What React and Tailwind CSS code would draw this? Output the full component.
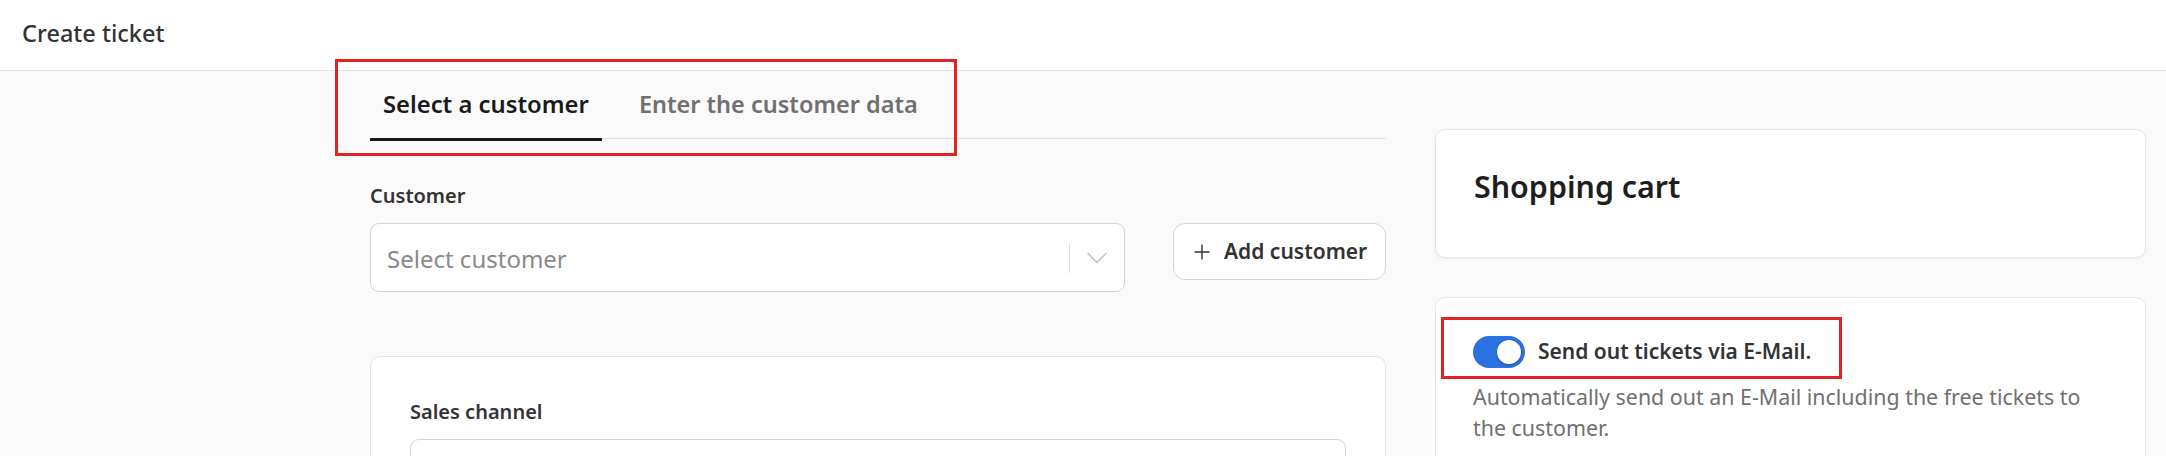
import React, { useState } from 'react';

// Thin chevron used in the customer select.
const Chevron = () => (
  <svg width="20" height="12" viewBox="0 0 20 12" fill="none" className="text-[#c4c4c4]">
    <path d="M1 1.5 L10 10.5 L19 1.5" stroke="currentColor" strokeWidth="1.6" strokeLinecap="round" strokeLinejoin="round" />
  </svg>
);

const Plus = () => (
  <svg width="16" height="16" viewBox="0 0 16 16" fill="none" className="text-[#333333]">
    <path d="M8 1 V15 M1 8 H15" stroke="currentColor" strokeWidth="1.4" strokeLinecap="round" />
  </svg>
);

const App = () => {
  const [tab, setTab] = useState('select');
  const [sendMail, setSendMail] = useState(true);

  return (
    <div className="min-h-screen bg-[#fafafa] font-['Noto_Sans',sans-serif]">
      {/* Top bar */}
      <header className="h-[71px] bg-white border-b border-[#e3e3e3] flex items-center pl-[22px]">
        <h1 className="text-[23.5px] font-medium text-[#333333] leading-none -mt-[2px]">Create ticket</h1>
      </header>

      <div className="flex gap-[49px] pl-[370px] pr-[20px]">
        {/* Left column */}
        <div className="w-[1016px] shrink-0">
          <div className="relative flex border-b border-[#e0e0e0] h-[68px]">
            <button
              onClick={() => setTab('select')}
              className={`relative z-10 px-[13px] h-[70px] text-[23.8px] font-semibold leading-none border-b-[3px] ${tab === 'select' ? 'text-[#1a1a1a] border-[#1a1a1a]' : 'text-[#707070] border-transparent'}`}
            >
              Select a customer
            </button>
            <button
              onClick={() => setTab('enter')}
              className={`relative z-10 ml-[24px] px-[13px] h-[70px] text-[23.5px] font-semibold leading-none border-b-[3px] ${tab === 'enter' ? 'text-[#1a1a1a] border-[#1a1a1a]' : 'text-[#707070] border-transparent'}`}
            >
              Enter the customer data
            </button>
            {/* annotation frame */}
            <div className="absolute left-[-35px] top-[-12px] w-[622px] h-[97px] border-[3px] border-[#e42222] pointer-events-none" />
          </div>

          <div className="pt-[42px]">
            <label className="block text-[20px] font-semibold text-[#333333] leading-[30px]">Customer</label>
            <div className="mt-[12px] flex items-start gap-[48px]">
              <div className="flex-1 h-[69px] bg-white border border-[#d4d4d4] rounded-[9px] flex items-center pl-[16px] pr-[17px]">
                <span className="flex-1 text-[24px] text-[#8a8a8a] mt-[2px]">Select customer</span>
                <div className="w-px h-[30px] bg-[#dcdcdc] mr-[17px]" />
                <Chevron />
              </div>
              <button className="w-[213px] h-[57px] bg-white border border-[#d4d4d4] rounded-[12px] flex items-center pl-[20px] gap-[14px] text-[21px] font-semibold text-[#333333]">
                <Plus />
                Add customer
              </button>
            </div>

            <div className="mt-[64px] bg-white border border-[#e3e3e3] rounded-[10px] px-[39px] pt-[40px] pb-[30px]">
              <label className="block text-[20px] font-semibold text-[#333333] leading-[30px]">Sales channel</label>
              <div className="mt-[12px] h-[69px] border border-[#d4d4d4] rounded-[9px] bg-white" />
            </div>
          </div>
        </div>

        {/* Right column */}
        <div className="w-[711px] shrink-0 pt-[58px] flex flex-col gap-[39px]">
          <div className="bg-white border border-[#e6e6e6] rounded-[10px] shadow-[0_1px_3px_rgba(0,0,0,0.06)] px-[38px] pt-[33px] pb-[46px]">
            <h2 className="text-[30.4px] font-semibold text-[#1e1e1e] leading-[48px]">Shopping cart</h2>
          </div>

          <div className="bg-white border border-[#e6e6e6] rounded-[10px] px-[37px] pt-[38px] pb-[30px]">
            <div className="relative flex items-center gap-[13px]">
              <button
                onClick={() => setSendMail(!sendMail)}
                className={`relative w-[52px] h-[32px] rounded-full shrink-0 ${sendMail ? 'bg-[#2a72e0]' : 'bg-[#c8c8c8]'}`}
              >
                <span className={`absolute top-[4px] w-[24px] h-[24px] rounded-full bg-white shadow-[0_1px_3px_rgba(0,0,0,0.3)] ${sendMail ? 'left-[24px]' : 'left-[4px]'}`} />
              </button>
              <span className="text-[21px] font-semibold text-[#333333]">Send out tickets via E-Mail.</span>
              {/* annotation frame */}
              <div className="absolute left-[-32px] top-[-19px] w-[401px] h-[62px] border-[3px] border-[#e42222] pointer-events-none" />
            </div>
            <p className="mt-[13px] text-[21.4px] text-[#707070] leading-[31px]">
              Automatically send out an E-Mail including the free tickets to
              <br />
              the customer.
            </p>
          </div>
        </div>
      </div>
    </div>
  );
};

export default App;
